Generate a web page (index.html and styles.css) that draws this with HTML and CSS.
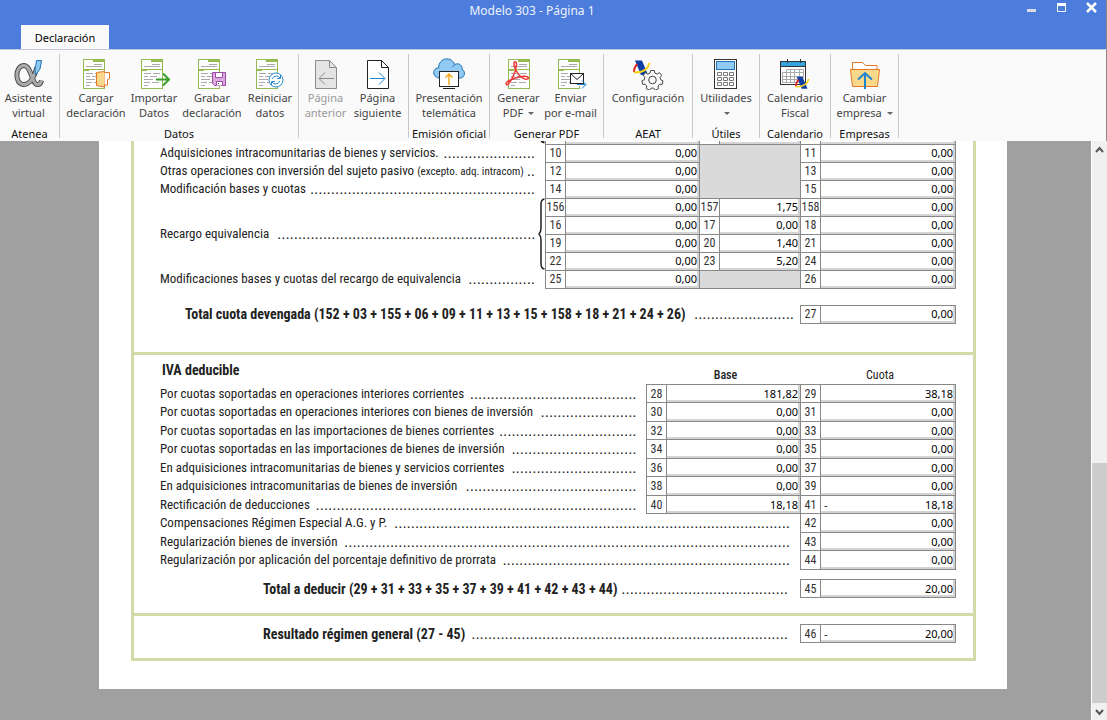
FILE: index.html
```
<!DOCTYPE html>
<html lang="es">
<head>
<meta charset="utf-8">
<title>Modelo 303 - Página 1</title>
<link rel="stylesheet" href="styles.css">
</head>
<body>
<svg class="defs" aria-hidden="true">
  <symbol id="form" viewBox="0 0 22 30">
    <rect x=".5" y=".5" width="21" height="29" fill="#fdfdfd" stroke="#96ba52"/>
    <path d="M10 0h12v3H10zM0 10h22v1H0zM0 11h6v1H0z" fill="#96ba52"/>
    <path d="M11 5.500h8M3 7.500h16M3 14.500h7M12 14.500h7M3 17.500h4M9 17.500h7M3 20.500h9M3 23.500h6M11 23.500h7M3 26.500h4" stroke="#aaa"/>
  </symbol>
  <symbol id="swirl" viewBox="0 0 18 16">
    <path d="M2 .5h7l6 14.500h-7z" fill="#0b3fa5"/>
    <path d="M4.500 4Q1 7 1 12" fill="none" stroke="#e2231a" stroke-width="2"/>
    <path d="M1 12.500Q14 13 16.500 3" fill="none" stroke="#f7d21b" stroke-width="2"/>
  </symbol>
</svg>
<div class="app">
  <header class="titlebar">
    <h1 class="title">Modelo 303 - Página 1</h1>
    <div class="controls">
      <button aria-label="Minimizar"><svg width="11" height="11"><path d="M1 8.500h9" stroke="#d9dce2" stroke-width="3"/></svg></button>
      <button aria-label="Maximizar"><svg width="11" height="11"><path d="M1.500 2v7.500h8V2" fill="none" stroke="#fff"/><path d="M1 2.500h9" stroke="#fff" stroke-width="3"/></svg></button>
      <button aria-label="Cerrar"><svg width="11" height="11"><path d="M1 1l9 9M10 1l-9 9" stroke="#fff" stroke-width="2.500"/></svg></button>
    </div>
    <button class="tab">Declaración</button>
  </header>
  <nav class="ribbon">
    <section class="group g-atenea">
      <div class="tools">
        <button class="tool"><svg class="icon" viewBox="0 0 32 32"><path d="M24 9C22 18 17 26.500 11 26.500C1 26.500 2 7.500 11 7.500C18 7.500 19 26 24 26.500Q27.500 27 28.500 22.500" fill="none" stroke="#505050" stroke-width="5"/><path d="M24 9C22 18 17 26.500 11 26.500C1 26.500 2 7.500 11 7.500C18 7.500 19 26 24 26.500Q27.500 27 28.500 22.500" fill="none" stroke="#aaa" stroke-width="3"/><path d="M23.500 2.500h5L27 11l-4.500 6-.5-5z" fill="#8cc8f0" stroke="#2272b8"/></svg><span>Asistente<br>virtual</span></button>
      </div><h2>Atenea</h2>
    </section>
    <section class="group g-datos">
      <div class="tools">
        <button class="tool"><svg class="icon" viewBox="0 0 32 32"><use href="#form" x="3" y="1" width="22" height="30"/><path d="M16.500 14.500l8-1v15.500l-8-1.500z" fill="#f8d98c" stroke="#e87722"/><path d="M24.500 14.500h5v6l-2 1v5.500h-3" fill="#fff" stroke="#e87722"/></svg><span>Cargar<br>declaración</span></button>
        <button class="tool"><svg class="icon" viewBox="0 0 32 32"><use href="#form" x="3" y="1" width="22" height="30"/><path d="M18 21.500h13M25 15.500l6 6-6 6" fill="none" stroke="#3a9e2c" stroke-width="2"/></svg><span>Importar<br>Datos</span></button>
        <button class="tool"><svg class="icon" viewBox="0 0 32 32"><use href="#form" x="2" y="1" width="22" height="30"/><path d="M16.500 14.500h13v13h-11l-2-2z" fill="#dba9de" stroke="#9b4aa3"/><path d="M19.500 14.500h7v5h-7zM20.500 27.500v-4h6v4" fill="#fff" stroke="#9b4aa3"/><path d="M22 25h1v1h-1z" fill="#333"/></svg><span>Grabar<br>declaración</span></button>
        <button class="tool"><svg class="icon" viewBox="0 0 32 32"><use href="#form" x="2" y="1" width="22" height="30"/><circle cx="22" cy="22" r="7" fill="#fff" stroke="#2a8bcb"/><path d="M18 21q1.500-3.500 5-3 2 .5 3 2M26.500 17v3.500H23M26 23q-1.500 3.500-5 3-2-.5-3-2M17.500 27v-3.500H21" fill="none" stroke="#2a8bcb"/></svg><span>Reiniciar<br>datos</span></button>
      </div><h2>Datos</h2>
    </section>
    <section class="group g-pagina">
      <div class="tools">
        <button class="tool" disabled><svg class="icon" viewBox="0 0 32 32"><path d="M5.500 2.500h14l7 7v21h-21z" fill="#e4e4e4" stroke="#8c8c8c"/><path d="M19.500 2.500v7h7M24 20.500H9.500M15 14.500l-6 6 6 6" fill="none" stroke="#8c8c8c"/></svg><span>Página<br>anterior</span></button>
        <button class="tool"><svg class="icon" viewBox="0 0 32 32"><path d="M5.500 2.500h14l7 7v21h-21z" fill="#fff" stroke="#222"/><path d="M19.500 2.500v7h7" fill="none" stroke="#222"/><path d="M8 20.500h14.500M17 14.500l6 6-6 6" fill="none" stroke="#1f84cc"/></svg><span>Página<br>siguiente</span></button>
      </div>
    </section>
    <section class="group g-emision">
      <div class="tools">
        <button class="tool"><svg class="icon" viewBox="0 0 32 32"><path d="M6 20C-1 19-1 10 5.500 10C6-1 19-2 21.500 6.500C27 4 30 9 29 11.500C33 13 32 20 27 20z" fill="#90c9f1" stroke="#2272b8"/><path d="M21.500 7Q20 7.500 19.500 9" fill="none" stroke="#2272b8"/><rect x="6.500" y="13.500" width="19" height="15" fill="#fff" stroke="#222"/><path d="M10 30.500h12" stroke="#222"/><path d="M16 27V16M12.500 19.500L16 16l3.500 3.500" fill="none" stroke="#f6a81c" stroke-width="1.500"/></svg><span>Presentación<br>telemática</span></button>
      </div><h2>Emisión oficial</h2>
    </section>
    <section class="group g-pdf">
      <div class="tools">
        <button class="tool"><svg class="icon" viewBox="0 0 32 32"><use href="#form" x="5" y="1" width="22" height="30"/><path d="M3.500 26.500C1 24 10 20 19 18.500C27 17.500 27 22 22 21C16 19.500 11 10 11 5.500C11 3 14 3 13.500 7C13 14 8 23 5.500 26Q4.500 27 3.500 26.500z" fill="none" stroke="#ee3a36" stroke-width="1.500"/></svg><span>Generar<br>PDF <i class="caret"></i></span></button>
        <button class="tool"><svg class="icon" viewBox="0 0 32 32"><use href="#form" x="3" y="1" width="22" height="30"/><rect x="15.500" y="15.500" width="13" height="10" fill="#fff" stroke="#222"/><path d="M15.500 15.500l6.500 6 6.500-6" fill="none" stroke="#222"/><path d="M22 26h10v2H22z" fill="#fafafa"/><path d="M22 26.500h8.500M27 22.500l4 4-4 4" fill="none" stroke="#1f84cc"/></svg><span>Enviar<br>por e-mail</span></button>
      </div><h2>Generar PDF</h2>
    </section>
    <section class="group g-aeat">
      <div class="tools">
        <button class="tool"><svg class="icon" viewBox="0 0 32 32"><use href="#swirl" x="1" y="2" width="18" height="16"/><path d="M18.700 12.500h3.600l.6 2.600 2.200 1 2.300-1.500 2.300 2.800-1.600 2 .5 2.300 2.400 1.200-.8 3.400-2.700 0-1.500 1.900.5 2.500-3.200 1.400-1.700-2-2.400 0-1.700 2-3.200-1.400.5-2.600-1.500-1.800-2.600 0-.8-3.400 2.400-1.200.5-2.300-1.600-2 2.300-2.800 2.300 1.500 2.200-1z" fill="#fafafa" stroke="#444"/><circle cx="20.500" cy="22" r="3.800" fill="none" stroke="#444"/></svg><span>Configuración</span></button>
      </div><h2>AEAT</h2>
    </section>
    <section class="group g-utiles">
      <div class="tools">
        <button class="tool"><svg class="icon" viewBox="0 0 32 32"><rect x="4.500" y="1.500" width="22" height="29" fill="#fff" stroke="#333"/><rect x="6.500" y="3.500" width="18" height="8" fill="#90c9f1" stroke="#2272b8"/><path d="M7.500 14.500h4v3h-4zM13.500 14.500h4v3h-4zM19.500 14.500h4v3h-4zM7.500 19.500h4v3h-4zM13.500 19.500h4v3h-4zM19.500 19.500h4v3h-4zM7.500 24.500h4v3h-4zM13.500 24.500h4v3h-4zM19.500 24.500h4v3h-4z" fill="none" stroke="#777"/></svg><span>Utilidades<br><i class="caret"></i></span></button>
      </div><h2>Útiles</h2>
    </section>
    <section class="group g-calendario">
      <div class="tools">
        <button class="tool"><svg class="icon" viewBox="0 0 32 32"><rect x="1.500" y="3.500" width="25" height="23" fill="#fff" stroke="#333"/><path d="M2 4h24v4H2z" fill="#35a3dc"/><path d="M1 8.500h26M8.500 1v4M21.500 1v4" stroke="#333"/><path d="M7.500 11.500h17v8h-5v5h-16v-10h21M3.500 18.500h21M3.500 21.500h16M7.500 11.500v13M11.500 11.500v13M15.500 11.500v13M20.500 11.500v8" fill="none" stroke="#aaa"/><use href="#swirl" x="16" y="18" width="15" height="14"/></svg><span>Calendario<br>Fiscal</span></button>
      </div><h2>Calendario</h2>
    </section>
    <section class="group g-empresas">
      <div class="tools">
        <button class="tool"><svg class="icon" viewBox="0 0 32 32"><path d="M3.500 11V4.500h10l3 3h11.500V11" fill="#fff" stroke="#e87722"/><path d="M1.500 11.500h29l-2 17h-25z" fill="#f8d98c" stroke="#e87722"/><path d="M16 31V15M9 21.500l7-6.500 7 6.500" fill="none" stroke="#1f84cc" stroke-width="2"/></svg><span>Cambiar<br>empresa <i class="caret"></i></span></button>
      </div><h2>Empresas</h2>
    </section>
  </nav>
  <main class="workspace">
    <div class="viewport">
      <form class="sheet">
        <section class="block devengado">
          <table class="boxes">
            <colgroup><col><col class="c-brace"><col class="c-num"><col class="c-base"><col class="c-num"><col class="c-tipo"><col class="c-num"><col class="c-cuota"></colgroup>
            <tr><td></td><td class="brace"><svg width="8" height="17" viewBox="0 0 8 17"><path d="M3 0v12q0 3 3.500 3.500" fill="none" stroke="#222" stroke-width="2"/></svg></td><th>07</th><td class="v"><input aria-label="Casilla 07" value="0,00"></td><th>08</th><td class="v"><input aria-label="Casilla 08" value="0,00"></td><th>09</th><td class="v"><input aria-label="Casilla 09" value="0,00"></td></tr>
            <tr><td colspan="2"><div class="line"><span>Adquisiciones intracomunitarias de bienes y servicios.</span><span class="dots" aria-hidden="true">......................</span></div></td><th>10</th><td class="v"><input aria-label="Casilla 10" value="0,00"></td><td class="off" colspan="2" rowspan="3"></td><th>11</th><td class="v"><input aria-label="Casilla 11" value="0,00"></td></tr>
            <tr><td colspan="2"><div class="line"><span>Otras operaciones con inversión del sujeto pasivo <small>(excepto. adq. intracom)</small></span><span class="dots" aria-hidden="true">...</span></div></td><th>12</th><td class="v"><input aria-label="Casilla 12" value="0,00"></td><th>13</th><td class="v"><input aria-label="Casilla 13" value="0,00"></td></tr>
            <tr><td colspan="2"><div class="line"><span>Modificación bases y cuotas</span><span class="dots" aria-hidden="true">......................................................</span></div></td><th>14</th><td class="v"><input aria-label="Casilla 14" value="0,00"></td><th>15</th><td class="v"><input aria-label="Casilla 15" value="0,00"></td></tr>
            <tr><td rowspan="4"><div class="line"><span>Recargo equivalencia</span><span class="dots" aria-hidden="true">..............................................................</span></div></td><td class="brace" rowspan="4"><svg width="8" height="72" viewBox="0 0 8 72"><path d="M6.500 1Q3 1.500 3 6v24q0 4-2 6 2 2 2 6v24q0 4.500 3.500 5" fill="none" stroke="#222" stroke-width="1.500"/></svg></td><th>156</th><td class="v"><input aria-label="Casilla 156" value="0,00"></td><th>157</th><td class="v"><input aria-label="Casilla 157" value="1,75"></td><th>158</th><td class="v"><input aria-label="Casilla 158" value="0,00"></td></tr>
            <tr><th>16</th><td class="v"><input aria-label="Casilla 16" value="0,00"></td><th>17</th><td class="v"><input aria-label="Casilla 17" value="0,00"></td><th>18</th><td class="v"><input aria-label="Casilla 18" value="0,00"></td></tr>
            <tr><th>19</th><td class="v"><input aria-label="Casilla 19" value="0,00"></td><th>20</th><td class="v"><input aria-label="Casilla 20" value="1,40"></td><th>21</th><td class="v"><input aria-label="Casilla 21" value="0,00"></td></tr>
            <tr><th>22</th><td class="v"><input aria-label="Casilla 22" value="0,00"></td><th>23</th><td class="v"><input aria-label="Casilla 23" value="5,20"></td><th>24</th><td class="v"><input aria-label="Casilla 24" value="0,00"></td></tr>
            <tr><td colspan="2"><div class="line"><span>Modificaciones bases y cuotas del recargo de equivalencia</span><span class="dots" aria-hidden="true">................</span></div></td><th>25</th><td class="v"><input aria-label="Casilla 25" value="0,00"></td><td class="off" colspan="2"></td><th>26</th><td class="v"><input aria-label="Casilla 26" value="0,00"></td></tr>
          </table>
          <table class="boxes total devengada">
            <colgroup><col><col class="c-num"><col class="c-cuota"></colgroup>
            <tr><td><div class="line"><strong>Total cuota devengada (152 + 03 + 155 + 06 + 09 + 11 + 13 + 15 + 158 + 18 + 21 + 24 + 26)</strong><span class="dots" aria-hidden="true">........................</span></div></td><th>27</th><td class="v"><input aria-label="Casilla 27" value="0,00"></td></tr>
          </table>
        </section>
        <section class="block deducible">
          <table class="boxes lines">
            <colgroup><col><col class="c-gap"><col class="c-num"><col class="c-base"><col class="c-num"><col class="c-cuota"></colgroup>
            <thead><tr><td colspan="3" class="heading"><h3>IVA deducible</h3></td><td class="head"><b>Base</b></td><td></td><td class="head">Cuota</td></tr></thead>
            <tbody>
            <tr><td><div class="line"><span>Por cuotas soportadas en operaciones interiores corrientes</span><span class="dots" aria-hidden="true">........................................</span></div></td><td></td><th>28</th><td class="v"><input aria-label="Casilla 28" value="181,82"></td><th>29</th><td class="v"><input aria-label="Casilla 29" value="38,18"></td></tr>
            <tr><td><div class="line"><span>Por cuotas soportadas en operaciones interiores con bienes de inversión</span><span class="dots" aria-hidden="true">.......................</span></div></td><td></td><th>30</th><td class="v"><input aria-label="Casilla 30" value="0,00"></td><th>31</th><td class="v"><input aria-label="Casilla 31" value="0,00"></td></tr>
            <tr><td><div class="line"><span>Por cuotas soportadas en las importaciones de bienes corrientes</span><span class="dots" aria-hidden="true">.................................</span></div></td><td></td><th>32</th><td class="v"><input aria-label="Casilla 32" value="0,00"></td><th>33</th><td class="v"><input aria-label="Casilla 33" value="0,00"></td></tr>
            <tr><td><div class="line"><span>Por cuotas soportadas en las importaciones de bienes de inversión</span><span class="dots" aria-hidden="true">..............................</span></div></td><td></td><th>34</th><td class="v"><input aria-label="Casilla 34" value="0,00"></td><th>35</th><td class="v"><input aria-label="Casilla 35" value="0,00"></td></tr>
            <tr><td><div class="line"><span>En adquisiciones intracomunitarias de bienes y servicios corrientes</span><span class="dots" aria-hidden="true">..............................</span></div></td><td></td><th>36</th><td class="v"><input aria-label="Casilla 36" value="0,00"></td><th>37</th><td class="v"><input aria-label="Casilla 37" value="0,00"></td></tr>
            <tr><td><div class="line"><span>En adquisiciones intracomunitarias de bienes de inversión</span><span class="dots" aria-hidden="true">.........................................</span></div></td><td></td><th>38</th><td class="v"><input aria-label="Casilla 38" value="0,00"></td><th>39</th><td class="v"><input aria-label="Casilla 39" value="0,00"></td></tr>
            <tr><td><div class="line"><span>Rectificación de deducciones</span><span class="dots" aria-hidden="true">.............................................................................</span></div></td><td></td><th>40</th><td class="v"><input aria-label="Casilla 40" value="18,18"></td><th>41</th><td class="v"><div class="signed"><span>-</span><input aria-label="Casilla 41" value="18,18"></div></td></tr>
            <tr><td colspan="4"><div class="line"><span>Compensaciones Régimen Especial A.G. y P.</span><span class="dots" aria-hidden="true">...............................................................................................</span></div></td><th>42</th><td class="v"><input aria-label="Casilla 42" value="0,00"></td></tr>
            <tr><td colspan="4"><div class="line"><span>Regularización bienes de inversión</span><span class="dots" aria-hidden="true">...........................................................................................................</span></div></td><th>43</th><td class="v"><input aria-label="Casilla 43" value="0,00"></td></tr>
            <tr><td colspan="4"><div class="line"><span>Regularización por aplicación del porcentaje definitivo de prorrata</span><span class="dots" aria-hidden="true">.....................................................................</span></div></td><th>44</th><td class="v"><input aria-label="Casilla 44" value="0,00"></td></tr>
            </tbody>
          </table>
          <table class="boxes total deducir">
            <colgroup><col><col class="c-num"><col class="c-cuota"></colgroup>
            <tr><td><div class="line"><strong>Total a deducir (29 + 31 + 33 + 35 + 37 + 39 + 41 + 42 + 43 + 44)</strong><span class="dots" aria-hidden="true">........................................</span></div></td><th>45</th><td class="v"><input aria-label="Casilla 45" value="20,00"></td></tr>
          </table>
        </section>
        <section class="block resultado">
          <table class="boxes total">
            <colgroup><col><col class="c-num"><col class="c-cuota"></colgroup>
            <tr><td><div class="line"><strong>Resultado régimen general (27 - 45)</strong><span class="dots" aria-hidden="true">............................................................................</span></div></td><th>46</th><td class="v"><div class="signed"><span>-</span><input aria-label="Casilla 46" value="20,00"></div></td></tr>
          </table>
        </section>
      </form>
    </div>
    <div class="scrollbar">
      <button aria-label="Subir"><svg width="9" height="8"><path d="M1 6l3.500-4L8 6" fill="none" stroke="#555" stroke-width="2"/></svg></button>
      <div class="track"><div class="thumb"></div></div>
      <button aria-label="Bajar"><svg width="9" height="8"><path d="M1 2l3.500 4L8 2" fill="none" stroke="#555" stroke-width="2"/></svg></button>
    </div>
  </main>
</div>
</body>
</html>
```
FILE: styles.css
```
* { box-sizing: border-box; }
body { margin: 0; font: 11px/15px "Noto Sans", "Open Sans", sans-serif; color: #222; }
button { font: inherit; color: inherit; background: none; border: 0; padding: 0; margin: 0; }
h1, h2, h3 { margin: 0; font-weight: 400; }
.defs { position: absolute; width: 0; height: 0; }
.app { display: flex; flex-direction: column; height: 100vh; }

/* title bar */
.titlebar { display: grid; grid-template-columns: 1fr auto 1fr; grid-template-rows: 25px 24px; background: #4d7ddc; padding: 0 9px 0 21px; border-right: 1px solid #888; }
.title { grid-column: 2; font-size: 12px; line-height: 22px; color: #eef2fc; padding-right: 54px; }
.controls { display: flex; gap: 19px; justify-content: flex-end; align-items: flex-start; padding-top: 2px; }
.controls button { height: 11px; line-height: 0; }
.tab { grid-row: 2; grid-column: 1; justify-self: start; width: 88px; height: 24px; background: #fafafa; color: #000; }

/* ribbon */
.ribbon { display: flex; height: 92px; background: #fafafa; border-top: 1px solid #c4cad6; border-right: 1px solid #888; }
.group { display: flex; flex-direction: column; justify-content: space-between; flex: none; margin: 4px 0 3px; padding-top: 4px; border-right: 1px solid #c8c8c8; }
.group h2 { text-align: center; font-size: 11px; line-height: 9px; color: #111; white-space: nowrap; }
.tools { display: flex; justify-content: center; }
.tool { display: flex; flex-direction: column; align-items: center; flex: none; color: #444; width: 58px; white-space: nowrap; }
.tool:disabled { color: #999; }
.icon { width: 32px; height: 32px; flex: none; }
.caret { display: inline-block; border: 3px solid transparent; border-top-color: #666; border-bottom: 0; margin: 0 0 2px 2px; }
.g-atenea { width: 60px; }
.g-atenea .tools { padding-right: 2px; }
.g-datos { width: 239px; }
.g-datos .tools { justify-content: flex-start; padding-left: 7px; }
.g-pagina { width: 110px; }
.g-pagina .tool, .g-pdf .tool { width: 52px; }
.g-pagina .tools, .g-pdf .tools { padding-right: 4px; }
.g-emision { width: 81px; }
.g-pdf { width: 114px; }
.g-aeat { width: 89px; }
.g-utiles { width: 67px; }
.g-calendario { width: 71px; }
.g-empresas { width: 68px; }

/* document area */
.workspace { display: flex; flex: 1; min-height: 0; background: #a0a0a0; }
.viewport { flex: 1; display: flex; flex-direction: column; justify-content: flex-end; overflow: hidden; padding: 0 84px 31px 99px; }
.sheet { flex: none; background: #fff; padding: 0 31px 28px 32px; font: 13px/18px "Roboto Condensed", "Liberation Sans Narrow", Roboto, sans-serif; }
.block { border: 3px solid #d2daa8; border-top: 0; padding: 0 17px 0 26px; }
.devengado { padding-bottom: 28px; }
.deducible { padding-top: 6px; padding-bottom: 15px; }
.resultado { padding-top: 8px; padding-bottom: 15px; }
.deducible h3 { font-size: 14px; font-weight: 700; line-height: 18px; padding-left: 2px; }

.boxes { width: 100%; table-layout: fixed; border-collapse: collapse; }
.boxes tr { height: 18px; }
.lines tbody tr:nth-child(even) { height: 19px; }
.boxes td, .boxes th { padding: 0; }
.boxes th { border: 1px solid #888; font-size: 12px; line-height: 16px; font-weight: 400; text-align: center; color: #333; }
.boxes .v { border: 1px solid #888; box-shadow: inset -2px -2px #d4d4d4; }
.boxes .off { border: 1px solid #888; background: #dadada; }
.boxes input { display: block; width: 100%; min-width: 0; height: 16px; border: 0; padding: 0 2px 0 0; background: none; text-align: right; font: 11px/16px "Noto Sans", "Open Sans", sans-serif; color: #000; }
.signed { display: flex; padding-left: 3px; font: 11px/16px "Noto Sans", sans-serif; }
.boxes thead tr { height: 24px; }
.boxes .heading { vertical-align: top; }
.boxes .head { text-align: center; vertical-align: bottom; font-size: 12px; line-height: 12px; padding: 0 16px 3px 0; }
.head b { font-weight: 500; }
.c-brace { width: 10px; }
.c-gap { width: 10px; }
.c-num { width: 20px; }
.c-base { width: 134px; }
.c-tipo { width: 81px; }
.c-cuota { width: 135px; }
.brace svg { display: block; margin-left: 2px; }
.line { display: flex; justify-content: space-between; gap: 2px; height: 16px; line-height: 16px; white-space: nowrap; padding-right: 10px; }
.line small { font-size: 11px; }
.line strong { font-size: 14px; }
td:first-child:not([colspan]) > .line { padding-right: 0; }
.total td:first-child:not([colspan]) > .line { padding-right: 12px; }
.total.devengada td:first-child:not([colspan]) > .line { padding-right: 6px; }
.dots { flex: 1 1 0; overflow: hidden; font-family: "Liberation Sans", sans-serif; font-size: 15px; direction: rtl; }
.total { margin-top: 9px; }
.devengada { margin-top: 16px; }
.devengada strong { margin-left: 25px; }
.deducir strong, .resultado strong { margin-left: 103px; }
.resultado .total { margin-top: 0; }

/* scroll bar */
.scrollbar { width: 16px; display: flex; flex-direction: column; background: #f0f0f0; border-left: 1px solid #fff; }
.scrollbar button { height: 17px; line-height: 0; }
.track { flex: 1; display: flex; flex-direction: column; justify-content: flex-end; }
.thumb { height: 44%; background: #cdcdcd; }
```
